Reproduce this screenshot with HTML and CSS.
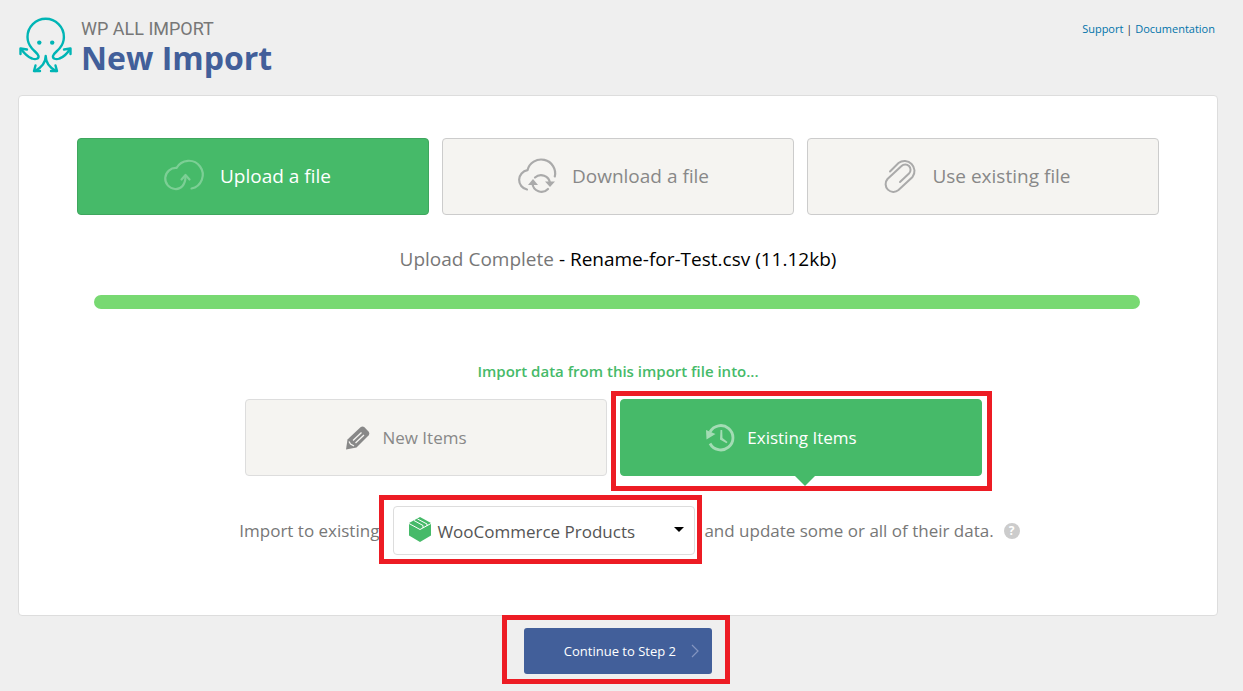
FILE: index.html
```html
<!DOCTYPE html>
<html lang="en">
<head>
    <meta charset="UTF-8">
    <meta name="viewport" content="width=device-width, initial-scale=1">
    <title>WP All Import - New Import</title>
    <link rel="stylesheet" href="styles.css">
</head>
<body>
    <header class="header">
        <svg class="logo" viewBox="-1 -1 54 58" aria-hidden="true">
            <g fill="none" stroke="#00b5b5" stroke-width="2.4" stroke-linecap="round" stroke-linejoin="round">
                <path d="M2 32C5 36 8.500 40 13 41.500C17 43 20 41.500 19.500 39C19 36.500 15.500 34.500 13 31.500C10 28 8.500 24 8.500 20A18.200 18.200 0 0 1 44.900 20C44.900 24 43.500 28 40.500 31.500C38 34.500 34.500 36.500 34 39C33.500 41.500 36.500 43 40.500 41.500C45 40 48.500 36 51 32"/>
                <path d="M1.500 37V31.500L8 32.500M51.500 37V31.500L45 32.500"/>
                <path d="M26.700 39C26.700 47 21.500 51 16 54M26.700 39C26.700 47 31.500 51 37 54"/>
                <path d="M16.500 48.500L15 54H21M36.500 48.500L38 54H32"/>
            </g>
            <circle cx="20.300" cy="25.600" r="2.200" fill="#00b5b5"/>
            <circle cx="33.200" cy="25.600" r="2.200" fill="#00b5b5"/>
        </svg>
        <div class="header-title">
            <p>WP ALL IMPORT</p>
            <h1>New Import</h1>
        </div>
        <nav class="header-links">
            <a href="#">Support</a> | <a href="#">Documentation</a>
        </nav>
    </header>

    <main>
        <div class="card">
            <div class="upload-types">
                <button type="button" class="type-btn active">
                    <svg width="40" height="34" viewBox="0 1 40 34" aria-hidden="true">
                        <g fill="none" stroke="currentColor" stroke-width="2.200" stroke-linecap="round" stroke-linejoin="round">
                            <path d="M27.500 30.500A14 14 0 1 0 12.500 10A10.200 10.200 0 1 0 11 31C17 31.500 21.500 26.500 21.500 18.500"/>
                            <path d="M17.500 21.500L21.500 17L25.500 21.500"/>
                        </g>
                    </svg>
                    <span>Upload a file</span>
                </button>
                <button type="button" class="type-btn">
                    <svg width="40" height="34" viewBox="0 0 40 34" aria-hidden="true">
                        <g fill="none" stroke="currentColor" stroke-width="2.200" stroke-linecap="round" stroke-linejoin="round">
                            <path d="M11 30.500A9.800 9.800 0 0 1 11.500 11.200A14 13.800 0 0 1 38.800 17.500"/>
                            <path d="M19 18.500A9 9 0 0 1 34 24M32 30A9 9 0 0 1 16.500 24.500"/>
                        </g>
                        <path fill="currentColor" d="M12 26L17 20L22 26zM29 22.500H39L34 28z"/>
                    </svg>
                    <span>Download a file</span>
                </button>
                <button type="button" class="type-btn">
                    <svg width="32" height="34" viewBox="0 0 32 34" aria-hidden="true">
                        <path fill="none" stroke="currentColor" stroke-width="2" stroke-linecap="round" d="M6 12.500L14.500 4A10 10 0 0 1 28.500 18L14.500 31A7.800 7.800 0 0 1 3.500 20L17.500 7A5.200 5.200 0 0 1 25 14.500L16 23"/>
                    </svg>
                    <span>Use existing file</span>
                </button>
            </div>

            <p class="upload-status">Upload Complete <span>- Rename-for-Test.csv (11.12kb)</span></p>
            <div class="progress" role="progressbar" aria-label="Upload" aria-valuenow="100">
                <div class="progress-fill" style="width: 100%"></div>
            </div>

            <h2>Import data from this import file into...</h2>
            <div class="targets">
                <button type="button" class="target-btn">
                    <svg width="24" height="24" viewBox="0 0 24 24" aria-hidden="true">
                        <path fill="currentColor" d="M0 23.500L1.500 13.500L14.500 1.200Q16.500 -.3 18.500 1.200L22.500 5.500Q24 7.500 22.500 9.500L10.500 21.500z"/>
                        <path fill="none" stroke="#f5f4f1" stroke-width="1.300" d="M7 14.500L15.500 6.500M9.500 17L18 9M3 15.500L4.500 18L8 20"/>
                    </svg>
                    <span>New Items</span>
                </button>
                <button type="button" class="target-btn selected highlight">
                    <svg width="29" height="28" viewBox="0 0 29 28" aria-hidden="true">
                        <path fill="none" stroke="currentColor" stroke-width="2.800" d="M4 8A12.200 12.200 0 1 1 4 19.500"/>
                        <path fill="currentColor" d="M0 6L9.500 10L.5 15.500zM14.500 6H16.200L16.500 14L21.500 18L20.500 19.200L14 15.500z"/>
                    </svg>
                    <span>Existing Items</span>
                </button>
            </div>

            <div class="post-type">
                <label for="postType">Import to existing</label>
                <div class="select-box highlight">
                    <svg class="select-icon" width="22" height="25" viewBox="0 0 22 25" aria-hidden="true">
                        <path fill="#46ba69" d="M11 0L22 6V18.500L11 25L0 18.500V6z"/>
                        <path fill="none" stroke="#fff" stroke-width="1" d="M0 6.500L11 12.500L22 6.500M5 3.500L14 8.500V11M8.500 2L18 7V9"/>
                    </svg>
                    <select id="postType">
                        <option>WooCommerce Products</option>
                    </select>
                </div>
                <span>and update some or all of their data.</span>
                <a href="#" class="help" aria-label="Help">?</a>
            </div>
        </div>

        <div class="submit-row">
            <button type="submit" class="continue-btn highlight">
                Continue to Step 2
                <svg width="8" height="14" viewBox="0 0 8 14" aria-hidden="true">
                    <path fill="none" stroke="#8495c0" stroke-width="1.200" d="M1 1L7 7L1 13"/>
                </svg>
            </button>
        </div>
    </main>
</body>
</html>
```
FILE: styles.css
```css
* {
    box-sizing: border-box;
}
body {
    margin: 0;
    padding: 16px 25px 17px 18px;
    font-family: "Open Sans", "Noto Sans", sans-serif;
    background-color: #efefef;
    color: #777;
}
p, h1, h2 {
    margin: 0;
}
button, select {
    font-family: inherit;
}
button {
    cursor: pointer;
}

/* Header */
.header {
    display: flex;
    height: 79px;
}
.logo {
    width: 54px;
    height: 58px;
    margin-right: 9px;
}
.header-title p {
    font-family: Roboto, sans-serif;
    font-size: 18px;
    line-height: 26px;
}
.header-title h1 {
    font-size: 32px;
    line-height: 32px;
    color: #425f9a;
}
.header-links {
    margin-left: auto;
    padding-right: 3px;
    font-size: 11px;
    line-height: 26px;
    color: #333;
}
.header-links a {
    color: #0073aa;
    text-decoration: none;
}

/* Main card */
.card {
    padding: 42px 58px 60px;
    background-color: #fff;
    border: 1px solid #ddd;
    border-radius: 4px;
}
.upload-types {
    display: grid;
    grid-template-columns: repeat(3, 1fr);
    gap: 13px;
}
.type-btn, .target-btn {
    display: flex;
    align-items: center;
    justify-content: center;
    gap: 16px;
    height: 77px;
    padding: 0 11px 2px 0;
    background-color: #f5f4f1;
    border: 1px solid #ccc;
    border-radius: 4px;
    color: #888;
    font-size: 19px;
}
.type-btn svg {
    color: #aaa;
    overflow: visible;
}
.type-btn.active {
    background-color: #46ba69;
    border-color: #3fa65e;
    color: #fff;
}
.type-btn.active svg {
    color: #7ccf95;
}

.upload-status {
    margin-top: 30px;
    text-align: center;
    font-size: 19px;
    line-height: 28px;
}
.upload-status span {
    color: #000;
}
.progress {
    margin: 22px 19px 0 17px;
    border-radius: 7px;
}
.progress-fill {
    height: 14px;
    border-radius: 7px;
    background-color: #78d972;
}
h2 {
    margin-top: 52px;
    text-align: center;
    font-size: 15px;
    font-weight: 600;
    line-height: 20px;
    color: #46ba69;
}

/* New / existing items */
.targets {
    display: flex;
    justify-content: center;
    gap: 13px;
    margin: 18px 9px 0 0;
}
.target-btn {
    width: 362px;
    padding: 0 39px 0 0;
    border-color: #ddd;
    font-size: 17px;
    gap: 12px;
}
.target-btn.selected {
    background-color: #46ba69;
    border-color: #46ba69;
    color: #fff;
}
.target-btn.selected svg {
    color: #a3dcb4;
}
.target-btn.selected::before {
    content: "";
    position: absolute;
    top: 100%;
    left: 50%;
    margin-left: -7px;
    border: 11px solid transparent;
    border-top-color: #46ba69;
    border-bottom: 0;
}

.post-type {
    display: flex;
    align-items: center;
    justify-content: center;
    margin-top: 30px;
    padding-left: 23px;
    font-size: 17px;
}
.select-box {
    width: 302px;
    margin: 0 9px 0 14px;
}
.select-box select {
    display: block;
    width: 100%;
    height: 49px;
    padding: 2px 30px 0 43px;
    appearance: none;
    background-color: #fff;
    border: 1px solid #ddd;
    border-radius: 4px;
    color: #555;
    font-size: 17px;
}
.select-icon {
    position: absolute;
    left: 16px;
    top: 11px;
}
.select-box::before {
    content: "";
    position: absolute;
    right: 11px;
    top: 21px;
    border: 5px solid transparent;
    border-top-color: #000;
    border-bottom: 0;
    pointer-events: none;
}
.help {
    width: 16px;
    height: 16px;
    margin-left: 10px;
    border-radius: 50%;
    background-color: #ccc;
    color: #fff;
    font-size: 12px;
    font-weight: 700;
    line-height: 16px;
    text-align: center;
    text-decoration: none;
}

/* Submit */
.submit-row {
    display: flex;
    justify-content: center;
    margin-top: 12px;
}
.continue-btn {
    display: flex;
    align-items: center;
    justify-content: flex-end;
    gap: 15px;
    width: 188px;
    height: 46px;
    padding: 0 13px 0 0;
    background-color: #425f9a;
    border: 0;
    border-radius: 3px;
    color: #fff;
    font-size: 13px;
}

/* Red frames around the steps to follow */
.highlight {
    position: relative;
}
.highlight::after {
    content: "";
    position: absolute;
    border: 5px solid #ed1c24;
    pointer-events: none;
}
.target-btn.highlight::after {
    inset: -9px -11px -16px -10px;
}
.select-box.highlight::after {
    inset: -11px -7px -9px -14px;
}
.continue-btn.highlight::after {
    inset: -13px -18px -10px -22px;
}
```
